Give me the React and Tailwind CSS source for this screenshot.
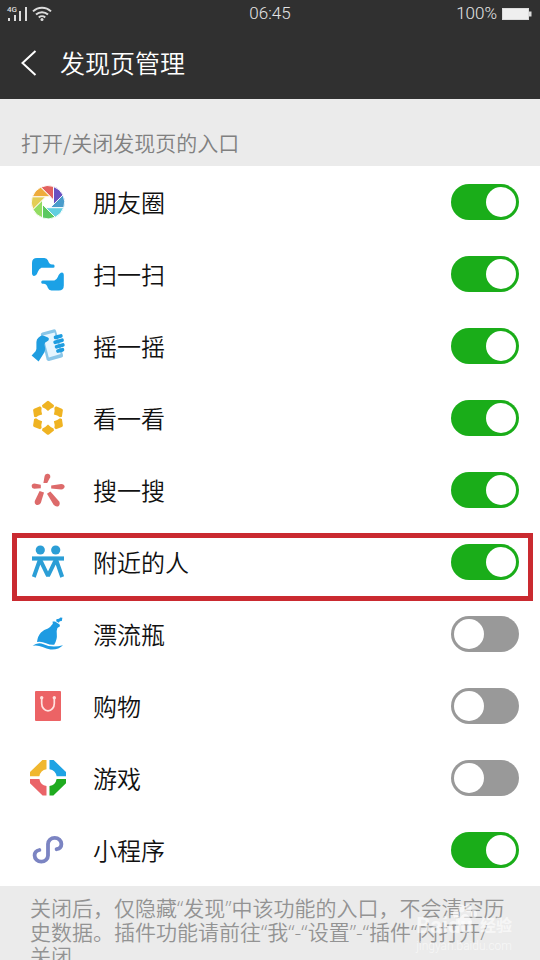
import React, { useState } from 'react';

const APERTURE_COLORS = ['#e2615f', '#6a50c0', '#4a9ccb', '#62cfe0', '#5cc860', '#93dc62', '#e3cd55', '#eeab3c'];

const MomentsIcon = () => (
  <g transform="translate(18 18.2)" stroke="#fff" strokeWidth="0.9" strokeLinejoin="round">
    {APERTURE_COLORS.map((color, i) => (
      <path
        key={color}
        d="M-7.2-15A16.7 16.7 0 0 1 5.5-15.8V-2.28Z"
        fill={color}
        transform={`rotate(${i * 45})`}
      />
    ))}
  </g>
);

const HAND = 'M2 7Q2 2 7 2H14.4Q17 2 18 4.6Q19.2 8.4 22 8.6H23.4Q24.6 8.8 24.6 10.2Q24.6 11.8 23.2 11.8H11.4Q9 12.8 8 15.4Q6.4 20 3.6 20Q2 19.6 2 17.6Z';

const ScanIcon = () => (
  <g fill="#1ba1e6">
    <path d={HAND} />
    <path d={HAND} transform="rotate(180 17.9 18.2)" />
  </g>
);

const ShakeIcon = () => (
  <g>
    <path d="M12.4 4.4L23.4 1.4Q25.4 1 26 2.8L33 27Q33.4 29 31.6 29.6L19 33Q17.2 33.3 16.6 31.6L10.8 7Q10.4 5 12.4 4.4Z" fill="#8ac6e8" />
    <path d="M13 7.6L24.6 4.4L30.6 26L18.8 29.4Z" fill="#e6f6ff" />
    <path d="M6.4 14Q6.4 11 8.6 9.4L10.6 8Q12 7 13.8 7.8L18 9.6Q19.8 10.8 18.4 12.6L15 14.8Q14 16.4 14.8 18.4Q16 21.4 14.6 24L8.6 33.4L1.6 27.6L5.6 23.2Q6.8 21.6 6.4 18.6Z" fill="#1f9de0" />
    <path d="M25.6 9.4L30.8 8M25.2 14.2L32 12.2M26.6 18.8L32.8 17M28 23L32.4 21.8" stroke="#1f9de0" strokeWidth="3.8" strokeLinecap="round" />
  </g>
);

const LookIcon = () => (
  <g transform="translate(18 17.8)" fill="#efb322">
    {[0, 60, 120, 180, 240, 300].map((deg) => (
      <path key={deg} d="M-6-12.6L-1-16.6Q0-17.4 1-16.6L6-12.6L5.6-10.6Q2.4-9.6 0-6.8Q-2.4-9.6-5.6-10.6Z" transform={`rotate(${deg})`} />
    ))}
  </g>
);

const SearchIcon = () => (
  <g fill="#dd6a6a">
    <path d="M13.4 11L14.6 4Q15.4 1.4 18 1.8Q20.8 2.6 20.2 5.2L17.2 11Z" />
    <path d="M21.2 13.4L31.2 12Q34.4 12 34.6 14.6Q34.4 17.4 31.2 17.4L21.2 16.6Z" />
    <path d="M17 21.8L20.4 19.4L29.2 29.6Q30.6 32.4 28.4 34.2Q25.8 35.2 23.6 32.8Z" />
    <path d="M9.6 19L14 20.4L10.8 31Q9.2 33.6 6.6 33Q4.2 31.8 4.8 29Z" />
    <path d="M10.8 12.8V16.2L4.2 16.8Q1.6 16.4 1.6 14Q1.8 11.4 4.4 11.4Z" />
  </g>
);

const NearbyIcon = () => (
  <g fill="#2b9ed6">
    <circle cx="10.3" cy="6" r="4.6" />
    <circle cx="25.7" cy="6" r="4.6" />
    <path d="M2 12.4H34V16.6H2Z" />
    <path d="M10 15.4L3.8 33M10 15.4L18 32L26 15.4L32.2 33" fill="none" stroke="#2b9ed6" strokeWidth="4" strokeLinejoin="bevel" />
  </g>
);

const BottleIcon = () => (
  <g fill="#1e9be2">
    <path d="M26.4 3.2L29 2.8L30.4 1.4L32.4 1.8L31.8 5L29.8 5.2L28.8 6.8L26.2 5.2Z" />
    <path d="M22.6 5.4L25 5.6L29.6 8.4L30 10.2L27.4 12Q26.4 14.4 26.8 18Q27.4 23.4 24.2 28.8Q20 29.2 16 27.2Q11 25 7 26Q7.6 20 11 16.4Q14 13.6 18 12.4Q20.6 11 22.8 7.8Z" />
    <path d="M2.6 29.8Q7.6 25.8 13.6 28.2Q21.6 32 33 29.2Q28.4 34 20.4 33.4Q16.6 33 12.6 31Q7.6 28.8 2.6 29.8Z" />
  </g>
);

const ShoppingIcon = () => (
  <g>
    <rect x="5" y="3" width="26" height="30" rx="1" fill="#ec6365" />
    <path d="M11.7 10V15.4A6.3 7.4 0 0 0 24.3 15.4V10" fill="none" stroke="#ffe3e0" strokeWidth="1.7" />
    <circle cx="11.7" cy="9.8" r="1.7" fill="#ffe3e0" />
    <circle cx="24.3" cy="9.8" r="1.7" fill="#ffe3e0" />
  </g>
);

const PANEL = 'M-1.5-17.8H-5.4L-18-5.6V-1.3H-8.6A8.6 8.6 0 0 1-1.5-8.4Z';

const GamesIcon = () => (
  <g transform="translate(18 17.6)">
    <path d={PANEL} fill="#f0b72f" />
    <path d={PANEL} fill="#1ea3e4" transform="scale(-1 1)" />
    <path d={PANEL} fill="#ea6468" transform="scale(1 -1)" />
    <path d={PANEL} fill="#1fab1f" transform="scale(-1 -1)" />
  </g>
);

const MiniProgramIcon = () => (
  <path
    d="M9.4 18C6.4 18.6 4.6 20.8 4.6 23.4A6.7 6.2 0 0 0 18 23.4V12A6.7 6.2 0 0 1 31.4 12C31.4 14.4 29.6 16.6 26.6 17.2"
    fill="none"
    stroke="#7b84c2"
    strokeWidth="3.8"
    strokeLinecap="round"
  />
);

const ENTRIES = [
  { id: 'moments', label: '朋友圈', Icon: MomentsIcon, on: true },
  { id: 'scan', label: '扫一扫', Icon: ScanIcon, on: true },
  { id: 'shake', label: '摇一摇', Icon: ShakeIcon, on: true },
  { id: 'look', label: '看一看', Icon: LookIcon, on: true },
  { id: 'search', label: '搜一搜', Icon: SearchIcon, on: true },
  { id: 'nearby', label: '附近的人', Icon: NearbyIcon, on: true, marked: true },
  { id: 'bottle', label: '漂流瓶', Icon: BottleIcon, on: false },
  { id: 'shopping', label: '购物', Icon: ShoppingIcon, on: false },
  { id: 'games', label: '游戏', Icon: GamesIcon, on: false },
  { id: 'mini', label: '小程序', Icon: MiniProgramIcon, on: true },
];

const StatusBar = () => (
  <div className="grid grid-cols-3 items-center h-7 px-2 font-[Roboto,sans-serif] text-[17px] font-light text-[#e4e4e4]">
    <div className="flex items-center gap-1">
      <svg className="overflow-visible" width="20" height="16" viewBox="0 0 20 16" fill="#dcdcdc">
        <text x="-1" y="6" fontSize="8" fontFamily="Roboto, sans-serif" fontWeight="500">4G</text>
        <path d="M0 12h2v3H0zM6 9h2v6H6zM11 5h2v10h-2zM17 1h2v14h-2z" />
      </svg>
      <svg width="20" height="16" viewBox="0 0 20 16" fill="none" stroke="#dcdcdc" strokeWidth="2">
        <path d="M1 5.4A13 13 0 0 1 19 5.4M4 8.6A8.8 8.8 0 0 1 16 8.6M6.8 11.4A4.8 4.8 0 0 1 13.2 11.4" />
        <circle cx="10" cy="13.6" r="1.5" fill="#dcdcdc" stroke="none" />
      </svg>
    </div>
    <span className="text-center">06:45</span>
    <div className="flex items-center justify-end gap-1">
      <span>100%</span>
      <svg width="31" height="14" viewBox="0 0 31 14">
        <rect x="1.5" y="1.5" width="26" height="11" fill="#efefef" stroke="#dcdcdc" />
        <path d="M28 4.5h2.5v5H28z" fill="#dcdcdc" />
      </svg>
    </div>
  </div>
);

const EntryRow = ({ entry, checked, onToggle }) => {
  const { id, label, Icon, marked } = entry;
  return (
    <li className="relative flex items-center h-18 pl-[30px] pr-[21px]">
      <svg className="shrink-0" width="36" height="36" viewBox="0 0 36 36" aria-hidden="true">
        <Icon />
      </svg>
      <label htmlFor={id} className="flex-1 pl-[27px] text-2xl text-[#111]">{label}</label>
      <input
        id={id}
        type="checkbox"
        role="switch"
        checked={checked}
        onChange={() => onToggle(id)}
        className="appearance-none flex items-center shrink-0 w-17 h-9 px-[3px] rounded-full bg-[#999] cursor-pointer before:block before:size-[30px] before:rounded-full before:bg-white checked:justify-end checked:bg-[#1aad19]"
      />
      {marked && (
        <div className="absolute top-[7px] -bottom-[3px] left-3 right-[7px] z-10 border-5 border-[#ca2a30] pointer-events-none" />
      )}
    </li>
  );
};

const Watermark = () => (
  <div className="absolute top-[26px] right-7 text-white/60 font-[Roboto,'Noto_Sans_CJK_SC',sans-serif] pointer-events-none">
    <div className="flex items-center justify-between leading-7">
      <span className="text-[22px] font-bold">Baidu</span>
      <span className="text-base font-bold">经验</span>
    </div>
    <div className="text-xs leading-3">jingyan.baidu.com</div>
    <svg className="absolute -top-2 left-9" width="26" height="22" viewBox="0 0 26 22" fill="currentColor">
      <ellipse cx="4" cy="10" rx="3" ry="4" />
      <ellipse cx="9.500" cy="4.500" rx="3" ry="4" />
      <ellipse cx="16.500" cy="4.500" rx="3" ry="4" />
      <ellipse cx="22" cy="10" rx="3" ry="4" />
      <path d="M13 10Q16 10 18 14Q22 18 18 21Q13 20 8 21Q4 18 8 14Q10 10 13 10Z" />
    </svg>
  </div>
);

const App = () => {
  const [enabled, setEnabled] = useState(() => Object.fromEntries(ENTRIES.map((e) => [e.id, e.on])));

  const handleToggle = (id) => {
    setEnabled((prev) => ({ ...prev, [id]: !prev[id] }));
  };

  return (
    <div className="h-screen overflow-hidden bg-[#ebebeb] font-['Noto_Sans_CJK_SC',sans-serif] font-[350]">
      {/* Header */}
      <header className="bg-[#303030] pb-px">
        <StatusBar />
        <div className="flex items-center h-[70px] pl-5">
          <button type="button" aria-label="返回" className="cursor-pointer">
            <svg width="18" height="28" viewBox="0 0 18 28" fill="none" stroke="#fff" strokeWidth="2">
              <path d="M15.500 2L2.500 14L15.500 26" />
            </svg>
          </button>
          <h1 className="pl-[22px] text-[25px] font-[350] text-white">发现页管理</h1>
        </div>
      </header>

      <main>
        <h2 className="pt-[27px] pb-[7px] px-[21px] text-[21px] leading-[33px] font-[350] text-[#808080]">打开/关闭发现页的入口</h2>

        {/* Entries */}
        <ul className="bg-white">
          {ENTRIES.map((entry) => (
            <EntryRow key={entry.id} entry={entry} checked={enabled[entry.id]} onToggle={handleToggle} />
          ))}
        </ul>

        {/* Footnote */}
        <div className="relative pt-2.5 pl-[30px] pr-7">
          <p className="font-['Open_Sans','Noto_Sans_CJK_SC',sans-serif] text-[21px] leading-6 text-[#939393]">
            关闭后，仅隐藏“发现”中该功能的入口，不会清空历史数据。插件功能请前往“我“-“设置”-“插件“内打开/<span className="inline-block">关闭。</span>
          </p>
          <Watermark />
        </div>
      </main>
    </div>
  );
};

export default App;
